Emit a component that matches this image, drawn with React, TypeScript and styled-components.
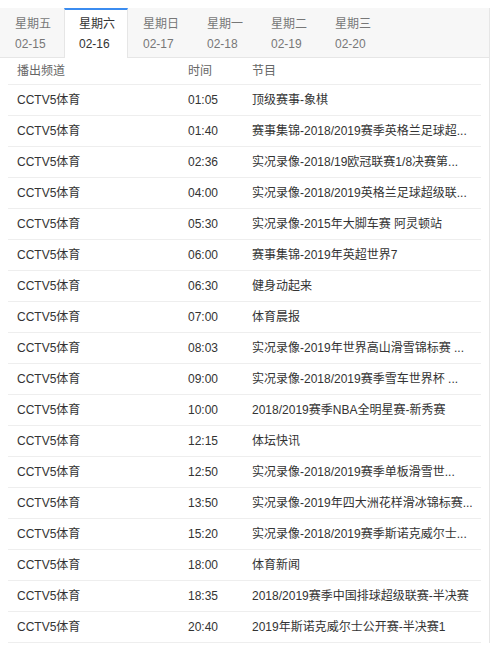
import React from "react";
import styled, { createGlobalStyle } from "styled-components";

const Global = createGlobalStyle`
  html, body { margin: 0; padding: 0; background: #fff; }
  body { font-family: "Liberation Sans", Arial, "Noto Sans CJK SC", sans-serif; font-size: 12px; color: #333; }
`;

const Panel = styled.div`
  width: 489px;
  margin-top: 8px;
  border-right: 1px solid #e6e6e6;
  background: #fff;
`;

const TabBar = styled.div`
  display: flex;
  height: 49px;
  background: #f7f7f7;
  border-bottom: 1px solid #e6e6e6;
`;

const Tab = styled.div<{ $active?: boolean }>`
  box-sizing: border-box;
  width: 64px;
  height: ${(p) => (p.$active ? "50px" : "49px")};
  padding: 6px 0 0 14px;
  display: flex;
  flex-direction: column;
  gap: 4px;
  line-height: 16px;
  color: ${(p) => (p.$active ? "#333" : "#777")};
  background: ${(p) => (p.$active ? "#fff" : "transparent")};
  border-top: 2px solid ${(p) => (p.$active ? "#3b8cf0" : "transparent")};
  border-left: 1px solid ${(p) => (p.$active ? "#e6e6e6" : "transparent")};
  border-right: 1px solid ${(p) => (p.$active ? "#e6e6e6" : "transparent")};
`;

const Table = styled.div`
  margin: 0 8px;
  width: 473px;
`;

const Row = styled.div<{ $head?: boolean }>`
  display: grid;
  grid-template-columns: 171px 64px 1fr;
  height: ${(p) => (p.$head ? "26px" : "30px")};
  align-items: center;
  padding: 0 9px;
  border-bottom: 1px solid #eeeeee;
  color: ${(p) => (p.$head ? "#666" : "#333")};
  line-height: 16px;
`;

const Cell = styled.div`
  white-space: nowrap;
  min-width: 0;
`;

const tabs = [
  ["星期五", "02-15"],
  ["星期六", "02-16"],
  ["星期日", "02-17"],
  ["星期一", "02-18"],
  ["星期二", "02-19"],
  ["星期三", "02-20"],
];

const rows: [string, string][] = [
  ["01:05", "顶级赛事-象棋"],
  ["01:40", "赛事集锦-2018/2019赛季英格兰足球超..."],
  ["02:36", "实况录像-2018/19欧冠联赛1/8决赛第..."],
  ["04:00", "实况录像-2018/2019英格兰足球超级联..."],
  ["05:30", "实况录像-2015年大脚车赛 阿灵顿站"],
  ["06:00", "赛事集锦-2019年英超世界7"],
  ["06:30", "健身动起来"],
  ["07:00", "体育晨报"],
  ["08:03", "实况录像-2019年世界高山滑雪锦标赛 ..."],
  ["09:00", "实况录像-2018/2019赛季雪车世界杯 ..."],
  ["10:00", "2018/2019赛季NBA全明星赛-新秀赛"],
  ["12:15", "体坛快讯"],
  ["12:50", "实况录像-2018/2019赛季单板滑雪世..."],
  ["13:50", "实况录像-2019年四大洲花样滑冰锦标赛..."],
  ["15:20", "实况录像-2018/2019赛季斯诺克威尔士..."],
  ["18:00", "体育新闻"],
  ["18:35", "2018/2019赛季中国排球超级联赛-半决赛"],
  ["20:40", "2019年斯诺克威尔士公开赛-半决赛1"],
];

export default function App() {
  return (
    <>
      <Global />
      <Panel>
        <TabBar>
          {tabs.map(([d, t], i) => (
            <Tab key={t} $active={i === 1}>
              <span>{d}</span>
              <span>{t}</span>
            </Tab>
          ))}
        </TabBar>
        <Table>
          <Row $head>
            <Cell>播出频道</Cell>
            <Cell>时间</Cell>
            <Cell>节目</Cell>
          </Row>
          {rows.map(([time, prog]) => (
            <Row key={time}>
              <Cell>CCTV5体育</Cell>
              <Cell>{time}</Cell>
              <Cell>{prog}</Cell>
            </Row>
          ))}
        </Table>
      </Panel>
    </>
  );
}
